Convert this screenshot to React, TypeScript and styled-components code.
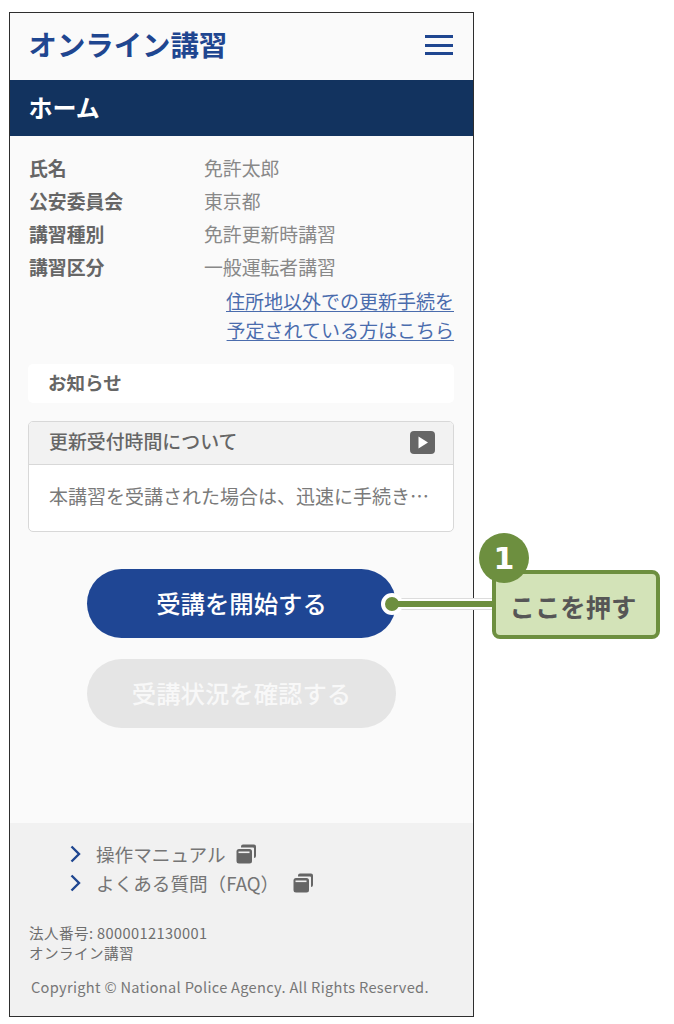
import styled, { createGlobalStyle } from "styled-components";

const GlobalStyle = createGlobalStyle`
  html, body {
    margin: 0;
    padding: 0;
    background: #fff;
  }
  body {
    font-family: "Noto Sans CJK JP", "Noto Sans", sans-serif;
    color: #6b6b6b;
  }
`;

const Page = styled.div`
  position: relative;
  width: 674px;
  height: 1024px;
  padding: 12px 0 0 9px;
  box-sizing: border-box;
`;

const Phone = styled.div`
  display: flex;
  flex-direction: column;
  width: 465px;
  height: 1005px;
  box-sizing: border-box;
  border: 1.5px solid #2e2e2e;
  background: #fafafa;
`;

const Header = styled.header`
  display: flex;
  align-items: center;
  justify-content: space-between;
  height: 67px;
  flex-shrink: 0;
  box-sizing: border-box;
  padding: 0 20px 3px 18.5px;
`;

const Logo = styled.h1`
  margin: 0 0 2px;
  font-size: 28.4px;
  font-weight: 700;
  line-height: 1;
  color: #1f4690;
`;

const Burger = styled.div`
  display: flex;
  flex-direction: column;
  gap: 5.5px;
  width: 28px;
  span {
    height: 3px;
    background: #1f4690;
  }
`;

const TitleBar = styled.div`
  display: flex;
  align-items: center;
  height: 56px;
  flex-shrink: 0;
  box-sizing: border-box;
  padding: 0 0 4px 18.5px;
  background: #12335f;
  color: #fff;
  font-size: 24px;
  font-weight: 700;
`;

const Main = styled.main`
  flex: 1;
  padding: 15px 19px 0 18px;
`;

const InfoRow = styled.div`
  display: grid;
  grid-template-columns: 175px 1fr;
  height: 33px;
  padding-left: 1px;
  align-items: center;
  font-size: 18.85px;
  color: #888;
  b {
    font-weight: 700;
    color: #666;
  }
`;

const LinkLines = styled.div`
  display: flex;
  flex-direction: column;
  align-items: flex-end;
  margin-top: 4px;
  a {
    height: 28.5px;
    line-height: 28.5px;
    font-size: 19px;
    color: #4a6cad;
    text-decoration: underline;
    text-underline-offset: 2px;
  }
`;

const NoticeBar = styled.div`
  display: flex;
  align-items: center;
  height: 39px;
  box-sizing: border-box;
  margin-top: 20px;
  padding: 0 0 3px 20px;
  background: #fff;
  border-radius: 5px;
  font-size: 18.5px;
  font-weight: 700;
  color: #666;
`;

const Card = styled.section`
  margin-top: 18px;
  height: 111px;
  box-sizing: border-box;
  background: #fff;
  border: 1px solid #d8d8d8;
  border-radius: 5px;
  overflow: hidden;
`;

const CardHead = styled.div`
  display: flex;
  align-items: center;
  justify-content: space-between;
  height: 43px;
  box-sizing: border-box;
  padding: 0 18px 5px 20px;
  background: #f2f2f2;
  border-bottom: 1px solid #d8d8d8;
  font-size: 18.9px;
  font-weight: 500;
  color: #666;
`;

const PlayIcon = styled.svg`
  margin-top: 3px;
`;

const CardBody = styled.div`
  padding: 15px 20px 0;
  font-size: 19px;
  line-height: 32px;
  color: #7a7a7a;
  white-space: nowrap;
`;

const Buttons = styled.div`
  display: flex;
  flex-direction: column;
  align-items: center;
  gap: 21px;
  margin-top: 37px;
  padding-left: 1px;
`;

const PillButton = styled.button<{ $disabled?: boolean }>`
  width: 309px;
  height: 69px;
  box-sizing: border-box;
  padding: 0 0 3px;
  border: 0;
  border-radius: 35px;
  background: ${(p) => (p.$disabled ? "#e5e5e5" : "#1f4694")};
  color: ${(p) => (p.$disabled ? "#f8f8f8" : "#fff")};
  font-family: inherit;
  font-size: 24.4px;
  font-weight: 500;
`;

const Footer = styled.footer`
  height: 193px;
  flex-shrink: 0;
  box-sizing: border-box;
  padding: 16px 19px 0;
  background: #f1f1f1;
`;

const FooterLink = styled.div`
  display: flex;
  align-items: center;
  height: 29px;
  padding-left: 41px;
  font-size: 18.6px;
  color: #757575;
  svg {
    flex-shrink: 0;
  }
`;

const Chevron = styled.svg`
  margin-right: 15px;
`;

const CopyIcon = styled.svg<{ $gap: number }>`
  margin-left: ${(p) => p.$gap}px;
`;

const Corp = styled.div`
  margin-top: 26px;
  font-size: 14.6px;
  line-height: 20px;
  letter-spacing: 0.4px;
  color: #6e6e6e;
`;

const Copyright = styled.div`
  margin: 14px 0 0 2px;
  font-size: 14.6px;
  line-height: 20px;
  letter-spacing: 0.31px;
  color: #777;
  white-space: nowrap;
`;

const Callout = styled.div`
  position: absolute;
  left: 492px;
  top: 570px;
  display: flex;
  align-items: center;
  justify-content: center;
  width: 168px;
  height: 69px;
  box-sizing: border-box;
  padding: 2px 6px 0 0;
  background: #d3e3b8;
  border: 4px solid #6d8f3f;
  border-radius: 8px;
  font-size: 25.4px;
  font-weight: 700;
  color: #565656;
`;

const Badge = styled.div`
  position: absolute;
  left: 479px;
  top: 533px;
  display: flex;
  align-items: center;
  justify-content: center;
  width: 50px;
  height: 50px;
  border-radius: 50%;
  background: #6d8f3f;
  color: #fff;
  font-family: "DejaVu Sans", sans-serif;
  font-size: 30px;
  font-weight: 700;
`;

const LeaderHalo = styled.div`
  position: absolute;
  left: 392px;
  top: 598px;
  width: 101px;
  height: 12px;
  box-sizing: border-box;
  background: #fff;
  border-top: 1px solid #dcdcdc;
  border-bottom: 1px solid #dcdcdc;
`;

const LeaderLine = styled.div`
  position: absolute;
  left: 392px;
  top: 601px;
  width: 101px;
  height: 6px;
  background: #6d8f3f;
`;

const Dot = styled.div`
  position: absolute;
  left: 381px;
  top: 593px;
  width: 14px;
  height: 14px;
  border: 4px solid #fff;
  border-radius: 50%;
  background: #6d8f3f;
`;

const info = [
  ["氏名", "免許太郎"],
  ["公安委員会", "東京都"],
  ["講習種別", "免許更新時講習"],
  ["講習区分", "一般運転者講習"],
];

function ChevronIcon() {
  return (
    <Chevron width="11" height="18" viewBox="0 0 11 18">
      <path d="M1.5 1.5 L9 9 L1.5 16.5" fill="none" stroke="#1f4690" strokeWidth="2.4" />
    </Chevron>
  );
}

function Copy({ gap }: { gap: number }) {
  return (
    <CopyIcon $gap={gap} width="20" height="20" viewBox="0 0 20 20">
      <path d="M5 2.5 Q5 0.5 7 0.5 H18 Q20 0.5 20 2.5 V12 Q20 14 18 14 V4.5 Q18 3.5 17 3.5 H5 Z" fill="#666" />
      <rect x="0.5" y="5" width="15.5" height="14.5" rx="2.5" fill="#666" />
      <rect x="2.5" y="7.5" width="11" height="1.6" fill="#f1f1f1" />
    </CopyIcon>
  );
}

export default function App() {
  return (
    <Page>
      <GlobalStyle />
      <Phone>
        <Header>
          <Logo>オンライン講習</Logo>
          <Burger>
            <span />
            <span />
            <span />
          </Burger>
        </Header>
        <TitleBar>ホーム</TitleBar>
        <Main>
          {info.map(([label, value]) => (
            <InfoRow key={label}>
              <b>{label}</b>
              <span>{value}</span>
            </InfoRow>
          ))}
          <LinkLines>
            <a>住所地以外での更新手続を</a>
            <a>予定されている方はこちら</a>
          </LinkLines>
          <NoticeBar>お知らせ</NoticeBar>
          <Card>
            <CardHead>
              更新受付時間について
              <PlayIcon width="25" height="23" viewBox="0 0 25 23">
                <rect width="25" height="23" rx="4" fill="#666" />
                <path d="M8.5 5.5 L18 11.5 L8.5 17.5 Z" fill="#fff" />
              </PlayIcon>
            </CardHead>
            <CardBody>本講習を受講された場合は、迅速に手続き…</CardBody>
          </Card>
          <Buttons>
            <PillButton>受講を開始する</PillButton>
            <PillButton $disabled>受講状況を確認する</PillButton>
          </Buttons>
        </Main>
        <Footer>
          <FooterLink>
            <ChevronIcon />
            操作マニュアル
            <Copy gap={10} />
          </FooterLink>
          <FooterLink>
            <ChevronIcon />
            よくある質問（FAQ）
            <Copy gap={14} />
          </FooterLink>
          <Corp>
            法人番号: 8000012130001
            <br />
            オンライン講習
          </Corp>
          <Copyright>Copyright © National Police Agency. All Rights Reserved.</Copyright>
        </Footer>
      </Phone>
      <LeaderHalo />
      <Dot />
      <LeaderLine />
      <Callout>ここを押す</Callout>
      <Badge>1</Badge>
    </Page>
  );
}
